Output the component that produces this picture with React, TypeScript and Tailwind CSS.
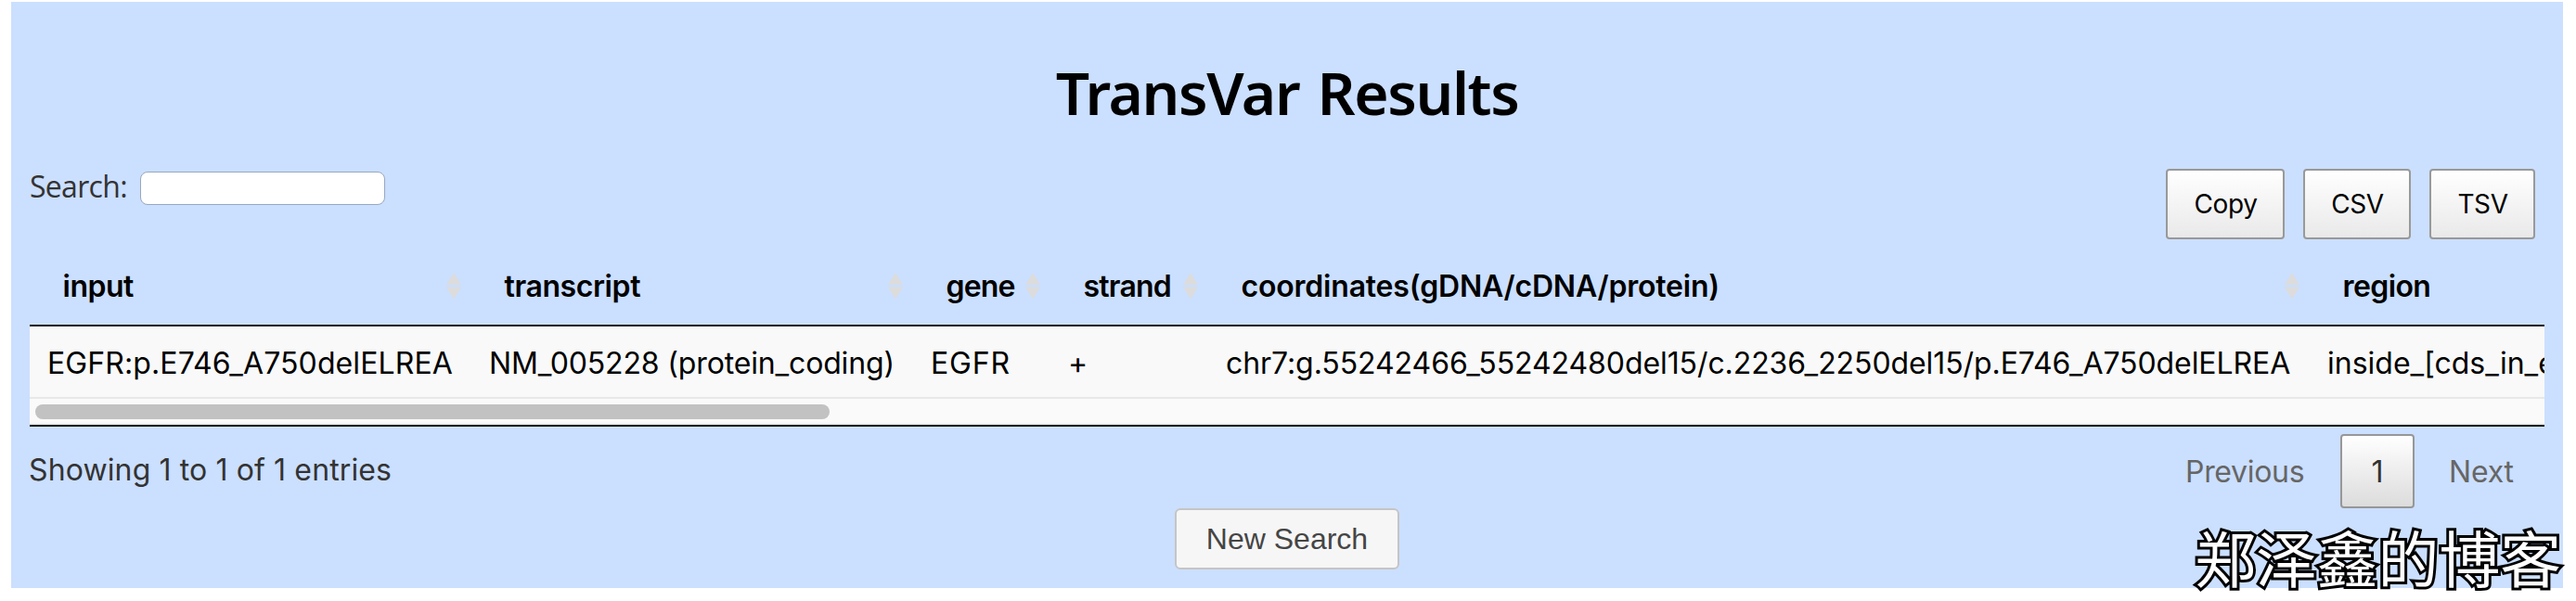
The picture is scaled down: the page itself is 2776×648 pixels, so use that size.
import React from "react";

type Column = {
  name: string;
  value: string;
  width: string;
  headTracking: string;
  bodyTracking: string;
};

const columns: Column[] = [
  { name: "input", value: "EGFR:p.E746_A750delELREA", width: "w-[476px]", headTracking: "tracking-[-0.5px]", bodyTracking: "tracking-[0.1px]" },
  { name: "transcript", value: "NM_005228 (protein_coding)", width: "w-[476px]", headTracking: "tracking-[-0.4px]", bodyTracking: "tracking-[-0.15px]" },
  { name: "gene", value: "EGFR", width: "w-[148px]", headTracking: "tracking-[-0.8px]", bodyTracking: "tracking-[0.8px]" },
  { name: "strand", value: "+", width: "w-[170px]", headTracking: "tracking-[-0.8px]", bodyTracking: "tracking-normal" },
  { name: "coordinates(gDNA/cDNA/protein)", value: "chr7:g.55242466_55242480del15/c.2236_2250del15/p.E746_A750delELREA", width: "w-[1187px]", headTracking: "tracking-[-0.2px]", bodyTracking: "tracking-[-0.08px]" },
  { name: "region", value: "inside_[cds_in_exon_19]", width: "w-[520px]", headTracking: "tracking-[-0.6px]", bodyTracking: "tracking-normal" },
];

function SortIcon() {
  return (
    <svg width="16" height="29" viewBox="0 0 16 29" className="-mt-[2px] shrink-0" fill="#dcdcdc">
      <path d="M8 0L16 13H0Z" />
      <path d="M0 15.5H16L8 28.5Z" />
    </svg>
  );
}

function ExportButton({ label, width }: { label: string; width: string }) {
  return (
    <button
      className={`${width} h-[76px] rounded-[4px] border-2 border-[#999] bg-linear-to-b from-white to-[#e9e9e9] pl-px text-[28px] leading-none tracking-[-0.4px] text-black`}
    >
      {label}
    </button>
  );
}

export default function App() {
  return (
    <div className="h-[648px] w-[2776px] overflow-hidden bg-white pt-[2px] pl-3 font-['Inter','Noto_Sans_CJK_SC',sans-serif]">
      <main className="relative flex h-[632px] w-[2750px] flex-col bg-[#cbdfff] px-5">
        <h1 className="h-[180px] pt-[58px] text-center font-['Noto_Sans',sans-serif] text-[64px] leading-[80px] font-semibold tracking-[-1.4px] text-black [word-spacing:4px]">
          TransVar Results
        </h1>

        <div className="flex h-[76px] items-start justify-between pr-[10px]">
          <label className="flex items-start font-['Open_Sans',sans-serif] text-[32px] leading-[38px] tracking-[-0.7px] text-[#333]">
            <span className="w-[119px] whitespace-nowrap">Search:</span>
            <input className="mt-[3px] h-9 w-[264px] rounded-[8px] border border-[#97a8c0] bg-white px-2 tracking-normal outline-none" />
          </label>
          <div className="flex gap-5">
            <ExportButton label="Copy" width="w-[128px]" />
            <ExportButton label="CSV" width="w-[116px]" />
            <ExportButton label="TSV" width="w-[114px]" />
          </div>
        </div>

        <section className="w-[2710px] overflow-hidden border-b-2 border-[#111]">
          <div className="flex h-[94px] w-[2977px] border-b-2 border-[#111] pt-[31px]">
            {columns.map((c) => (
              <div
                key={c.name}
                className={`${c.width} ${c.headTracking} flex h-10 shrink-0 items-center justify-between pr-[11px] pl-[35.5px] text-[32px] leading-[40px] font-semibold whitespace-nowrap text-black`}
              >
                {c.name}
                <SortIcon />
              </div>
            ))}
          </div>
          <div className="flex h-[78px] w-[2977px] border-b-2 border-[#e8e8e8] bg-[#f9f9f9] pt-[19.5px]">
            {columns.map((c) => (
              <div
                key={c.name}
                className={`${c.width} ${c.bodyTracking} h-10 shrink-0 pl-[19px] text-[32px] leading-[40px] whitespace-nowrap text-black`}
              >
                {c.value}
              </div>
            ))}
          </div>
          <div className="h-[28px] border-b-2 border-[#ededed] bg-[#fafafa] pt-[6px] pl-[6px]">
            <div className="h-4 w-[856px] rounded-full bg-[#c2c2c2]" />
          </div>
        </section>

        <div className="flex h-[88px] items-start justify-between pt-2 text-[32px] leading-[40px]">
          <span className="-ml-px pt-[19px] tracking-[0.12px] text-[#333]">Showing 1 to 1 of 1 entries</span>
          <nav className="flex h-20 items-center text-[#666]">
            <span className="w-[167px] pt-[2px] tracking-[-0.3px]">Previous</span>
            <span className="flex h-20 w-20 items-center justify-center rounded-[4px] border-2 border-[#979797] bg-linear-to-b from-white to-[#dcdcdc] pt-px text-[#333]">
              1
            </span>
            <span className="w-[140px] pt-[2px] pl-[37px] tracking-[-0.2px]">Next</span>
          </nav>
        </div>

        <button className="h-[66px] w-[242px] self-center rounded-[6px] border-2 border-[#c5c5c5] bg-[#f6f6f6] font-['Liberation_Sans',sans-serif] text-[32px] leading-none text-[#454545]">
          New Search
        </button>

        <div className="absolute right-[2px] bottom-[-4px] text-[65.8px] leading-[68px] whitespace-nowrap text-white [-webkit-text-stroke:6px_#000] [paint-order:stroke_fill]">
          郑泽鑫的博客
        </div>
      </main>
    </div>
  );
}
